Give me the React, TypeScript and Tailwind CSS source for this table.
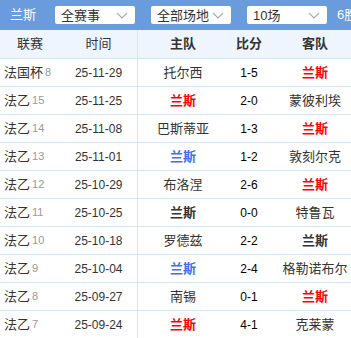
import React from 'react';

type Match = {
  league: string;
  round: number;
  date: string;
  home: string;
  score: string;
  away: string;
  homeStyle?: 'red' | 'blue' | 'dark';
  awayStyle?: 'red' | 'blue' | 'dark';
};

const MATCHES: Match[] = [
  { league: '法国杯', round: 8, date: '25-11-29', home: '托尔西', score: '1-5', away: '兰斯', awayStyle: 'red' },
  { league: '法乙', round: 15, date: '25-11-25', home: '兰斯', score: '2-0', away: '蒙彼利埃', homeStyle: 'red' },
  { league: '法乙', round: 14, date: '25-11-08', home: '巴斯蒂亚', score: '1-3', away: '兰斯', awayStyle: 'red' },
  { league: '法乙', round: 13, date: '25-11-01', home: '兰斯', score: '1-2', away: '敦刻尔克', homeStyle: 'blue' },
  { league: '法乙', round: 12, date: '25-10-29', home: '布洛涅', score: '2-6', away: '兰斯', awayStyle: 'red' },
  { league: '法乙', round: 11, date: '25-10-25', home: '兰斯', score: '0-0', away: '特鲁瓦', homeStyle: 'dark' },
  { league: '法乙', round: 10, date: '25-10-18', home: '罗德兹', score: '2-2', away: '兰斯', awayStyle: 'dark' },
  { league: '法乙', round: 9, date: '25-10-04', home: '兰斯', score: '2-4', away: '格勒诺布尔', homeStyle: 'blue' },
  { league: '法乙', round: 8, date: '25-09-27', home: '南锡', score: '0-1', away: '兰斯', awayStyle: 'red' },
  { league: '法乙', round: 7, date: '25-09-24', home: '兰斯', score: '4-1', away: '克莱蒙', homeStyle: 'red' },
];

const teamClass = (style?: 'red' | 'blue' | 'dark') =>
  style === 'red'
    ? 'font-bold text-[#ff0000]'
    : style === 'blue'
      ? 'font-bold text-[#3f6ff0]'
      : style === 'dark'
        ? 'font-bold text-[#333333]'
        : 'text-[#333333]';

function Select({ label }: { label: string }) {
  return (
    <div className="flex h-[18px] w-[80px] shrink-0 items-center justify-between rounded-[2px] bg-white pl-[6px] pr-[7px]">
      <span className="text-[13px] leading-none text-[#333333]">{label}</span>
      <svg width="12" height="7" viewBox="0 0 12 7" fill="none">
        <polyline points="1,1 6,6 11,1" stroke="#aaaaaa" strokeWidth="1.2" />
      </svg>
    </div>
  );
}

export default function App() {
  return (
    <div className="h-[338px] w-[351px] overflow-hidden bg-white font-['Liberation_Sans','Noto_Sans_CJK_SC',sans-serif]">
      <div className="flex h-[30px] w-[380px] items-center bg-[#6a9bdc]">
        <span className="ml-[10px] w-[45px] text-[13px] text-white">兰斯</span>
        <Select label="全赛事" />
        <div className="ml-[16px]">
          <Select label="全部场地" />
        </div>
        <div className="ml-[16px]">
          <Select label="10场" />
        </div>
        <span className="ml-[10px] text-[13px] text-white">6胜</span>
      </div>
      <div className="w-[360px]">
        <div className="grid h-[29px] grid-cols-[60px_78px_90px_42px_90px] items-stretch border-b border-[#d6e4f5] bg-[#eef5fd] text-[13px] text-[#333333]">
          <div className="flex items-center justify-center">联赛</div>
          <div className="flex items-center justify-center border-r border-[#d6e4f5]">时间</div>
          <div className="flex items-center justify-center font-bold">主队</div>
          <div className="flex items-center justify-center font-bold">比分</div>
          <div className="flex items-center justify-center font-bold">客队</div>
        </div>
        {MATCHES.map((m) => (
          <div
            key={m.date}
            className="grid h-[28px] grid-cols-[60px_78px_90px_42px_90px] items-stretch border-b border-[#d6e4f5] text-[13px]"
          >
            <div className="flex items-center pl-[4px] text-[#333333]">
              {m.league}
              <span className="ml-[2px] text-[11px] text-[#999999]">{m.round}</span>
            </div>
            <div className="flex items-center justify-center border-r border-[#d6e4f5] text-[12px] text-[#333333]">
              {m.date}
            </div>
            <div className={`flex items-center justify-center ${teamClass(m.homeStyle)}`}>{m.home}</div>
            <div className="flex items-center justify-center text-[12px] text-black">{m.score}</div>
            <div className={`flex items-center justify-center ${teamClass(m.awayStyle)}`}>{m.away}</div>
          </div>
        ))}
      </div>
    </div>
  );
}
